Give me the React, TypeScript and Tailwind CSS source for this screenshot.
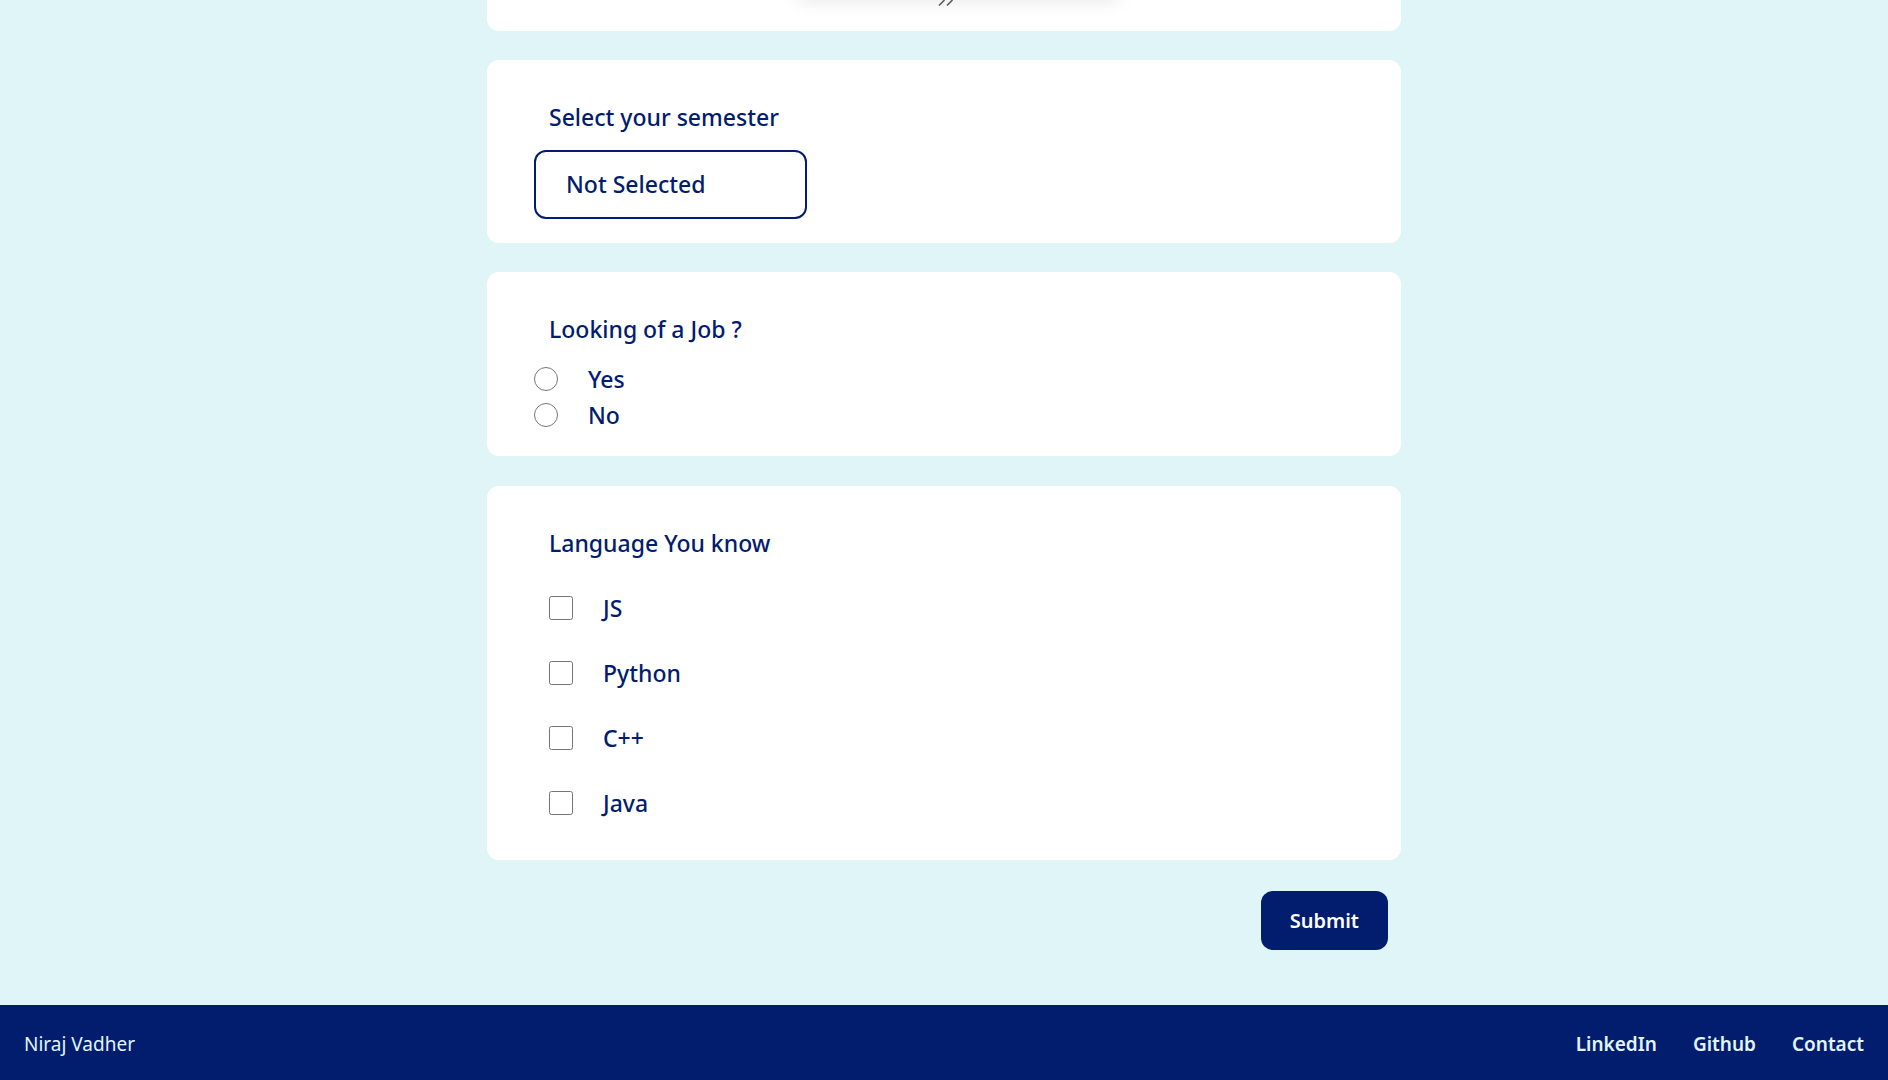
import React from "react";

const answers = ["Yes", "No"];
const languages = ["JS", "Python", "C++", "Java"];
const links = ["LinkedIn", "Github", "Contact"];

export default function App() {
  return (
    <div className="flex min-h-screen flex-col bg-[#e0f5f8] font-['Noto_Sans','Segoe_UI',sans-serif] text-[23px] leading-9 font-medium text-[#021c6e]">
      <main className="mx-auto w-full max-w-[914px] flex-1">
        <div className="relative flex h-[31px] justify-center overflow-hidden rounded-b-xl bg-white">
          <div className="absolute -top-3 left-[312px] h-2 w-[320px] shadow-[0_3px_18px_rgba(0,0,0,0.16)]" />
          <svg className="relative ml-1 h-2 w-[18px]" viewBox="0 0 18 8" stroke="#5a5a5a" strokeWidth="1.6" aria-hidden="true">
            <path d="M2 5.5 L7.5 0 M10 5.5 L15.5 0" />
          </svg>
        </div>
        <form className="flex flex-col" onSubmit={(e) => e.preventDefault()}>
          <section className="mt-[29px] rounded-xl bg-white px-[47px] pt-[39px] pb-6">
            <label htmlFor="semester" className="block px-[15px]">Select your semester</label>
            <select id="semester" className="mt-[15px] block h-[69px] w-[273px] appearance-none rounded-xl border-2 border-[#021c6e] bg-white px-[30px] pb-[2px]">
              <option>Not Selected</option>
            </select>
          </section>
          <fieldset className="mt-[29px] rounded-xl bg-white px-[47px] pt-[39px] pb-[23px]">
            <legend className="float-left w-full px-[15px] pb-[14px]">Looking of a Job ?</legend>
            <div className="clear-both">
              {answers.map((name) => (
                <label key={name} className="flex items-center gap-[30px]">
                  <input type="radio" name="job" className="size-6" />
                  {name}
                </label>
              ))}
            </div>
          </fieldset>
          <fieldset className="mt-[30px] rounded-xl bg-white px-[62px] pt-[39px] pb-[39px]">
            <legend className="float-left w-full pb-[29px]">Language You know</legend>
            <div className="clear-both flex flex-col gap-[29px]">
              {languages.map((name) => (
                <label key={name} className="flex items-center gap-[30px]">
                  <input type="checkbox" className="size-6" />
                  {name}
                </label>
              ))}
            </div>
          </fieldset>
          <button type="submit" className="mt-[31px] mr-[13px] self-end rounded-xl bg-[#021c6e] px-[29px] py-3 text-xl leading-[35px] font-semibold text-white">
            Submit
          </button>
        </form>
      </main>
      <footer className="flex items-center justify-between bg-[#021c6e] px-6 pt-[22px] pb-[18px] text-[19px] leading-[35px] text-[#e0f5f8]">
        <span className="font-normal">Niraj Vadher</span>
        <nav className="flex gap-9 font-semibold">
          {links.map((name) => (
            <a key={name} href="#">{name}</a>
          ))}
        </nav>
      </footer>
    </div>
  );
}
